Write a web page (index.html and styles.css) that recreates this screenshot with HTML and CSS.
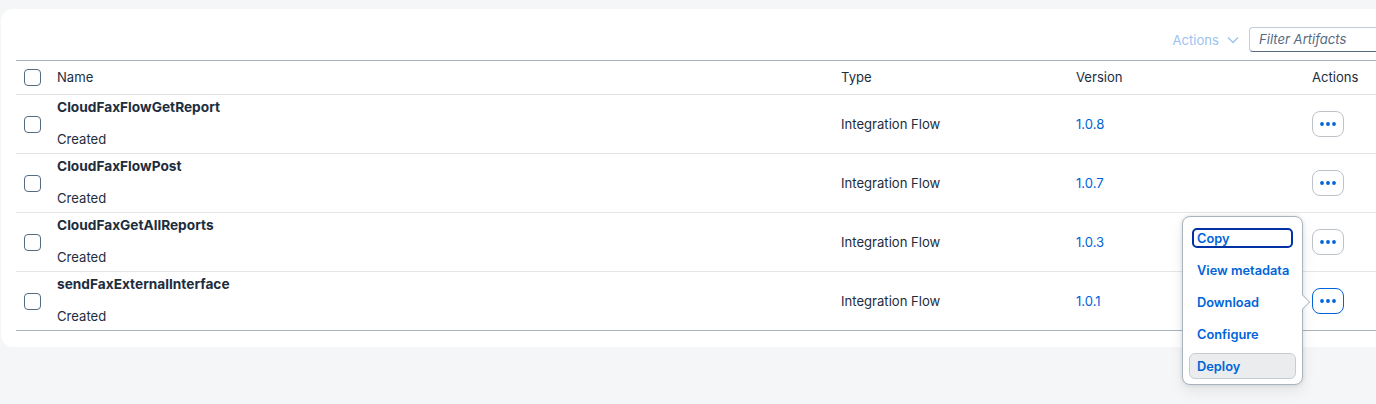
FILE: index.html
```html
<!DOCTYPE html>
<html>
<head>
<meta charset="utf-8">
<link rel="stylesheet" href="styles.css">
</head>
<body>
<div class="page">
  <div class="card">
    <div class="toolbar">
      <button class="menu-btn" disabled>Actions
        <svg width="12" height="8" viewBox="0 0 12 8"><path d="M1 1.5 6 6.5 11 1.5" fill="none" stroke="currentColor" stroke-width="1.3"/></svg>
      </button>
      <div class="filter">Filter Artifacts</div>
    </div>
    <div class="table">
      <div class="row head">
        <div class="cell cb"><span class="box"></span></div>
        <div class="cell">Name</div>
        <div class="cell">Type</div>
        <div class="cell">Version</div>
        <div class="cell">Actions</div>
      </div>
      <div class="row">
        <div class="cell cb"><span class="box"></span></div>
        <div class="cell name"><b>CloudFaxFlowGetReport</b><span>Created</span></div>
        <div class="cell">Integration Flow</div>
        <div class="cell link">1.0.8</div>
        <div class="cell"><button class="more"><svg width="16" height="4" viewBox="0 0 16 4"><circle cx="2" cy="2" r="1.9"/><circle cx="8" cy="2" r="1.9"/><circle cx="14" cy="2" r="1.9"/></svg></button></div>
      </div>
      <div class="row">
        <div class="cell cb"><span class="box"></span></div>
        <div class="cell name"><b>CloudFaxFlowPost</b><span>Created</span></div>
        <div class="cell">Integration Flow</div>
        <div class="cell link">1.0.7</div>
        <div class="cell"><button class="more"><svg width="16" height="4" viewBox="0 0 16 4"><circle cx="2" cy="2" r="1.9"/><circle cx="8" cy="2" r="1.9"/><circle cx="14" cy="2" r="1.9"/></svg></button></div>
      </div>
      <div class="row">
        <div class="cell cb"><span class="box"></span></div>
        <div class="cell name"><b>CloudFaxGetAllReports</b><span>Created</span></div>
        <div class="cell">Integration Flow</div>
        <div class="cell link">1.0.3</div>
        <div class="cell"><button class="more"><svg width="16" height="4" viewBox="0 0 16 4"><circle cx="2" cy="2" r="1.9"/><circle cx="8" cy="2" r="1.9"/><circle cx="14" cy="2" r="1.9"/></svg></button></div>
      </div>
      <div class="row last">
        <div class="cell cb"><span class="box"></span></div>
        <div class="cell name"><b>sendFaxExternalInterface</b><span>Created</span></div>
        <div class="cell">Integration Flow</div>
        <div class="cell link">1.0.1</div>
        <div class="cell"><button class="more active"><svg width="16" height="4" viewBox="0 0 16 4"><circle cx="2" cy="2" r="1.9"/><circle cx="8" cy="2" r="1.9"/><circle cx="14" cy="2" r="1.9"/></svg></button></div>
      </div>
    </div>
    <div class="popover">
      <div class="item focus">Copy</div>
      <div class="item">View metadata</div>
      <div class="item">Download</div>
      <div class="item">Configure</div>
      <div class="item hover">Deploy</div>
      <span class="arrow"></span>
    </div>
  </div>
</div>
</body>
</html>
```

FILE: styles.css
```css
* { box-sizing: border-box; }
html, body { margin: 0; padding: 0; }
body {
  background: #f5f6f7;
  font-family: "Inter", "Noto Sans", sans-serif;
  font-size: 13.1px;
  color: #1d2d3e;
  overflow: hidden;
  width: 1376px;
  height: 404px;
}
.page { padding: 9px 0 0 1px; }
.card {
  position: relative;
  width: 1392px;
  background: #fff;
  border-radius: 12px;
  padding: 18px 16px 16px 15px;
}
.toolbar {
  display: flex;
  justify-content: flex-end;
  align-items: center;
  height: 25px;
  margin-bottom: 8px;
}
.menu-btn {
  font: inherit;
  border: none;
  background: none;
  color: #9dc2f0;
  display: flex;
  align-items: center;
  gap: 8px;
  padding: 0;
  margin-right: 10px;
}
.menu-btn svg { margin-top: 1px; }
.filter {
  width: 128px;
  height: 25px;
  border: 1px solid #c4cbd2;
  border-bottom: 1px solid #556b82;
  border-radius: 4px 0 0 4px;
  padding: 3px 9px;
  font-style: italic;
  color: #556b82;
}
.table { border-top: 1px solid #a9b4be; }
.row {
  display: grid;
  grid-template-columns: 41px 784px 235px 236px 65px;
  height: 59px;
  border-bottom: 1px solid #e5e5e5;
}
.row.head { height: 34px; border-bottom-color: #e1e3e6; }
.row.head .cell { padding-bottom: 1px; }
.row.last { border-bottom-color: #a9b4be; }
.cell { display: flex; align-items: center; white-space: nowrap; }
.cb { padding-left: 8px; }
.box {
  width: 17px;
  height: 17px;
  border: 1px solid #556b82;
  border-radius: 4px;
}
.name {
  flex-direction: column;
  align-items: flex-start;
  justify-content: space-between;
  padding: 4px 0 5px;
}
.name b { font-weight: 700; font-size: 13.7px; line-height: 17px; }
.name span { line-height: 17px; }
.link { color: #0064d9; }
.more {
  width: 32px;
  height: 26px;
  border: 1px solid #bcc3ca;
  border-radius: 8px;
  background: #fff;
  display: flex;
  align-items: center;
  justify-content: center;
  padding: 0;
  fill: #0064d9;
}
.more.active { border-color: #0064d9; }
.popover {
  position: absolute;
  left: 1181px;
  top: 207px;
  width: 121px;
  height: 169px;
  background: #fff;
  border: 1px solid #a9b4be;
  border-radius: 8px;
  box-shadow: 0 0 4px rgba(0,0,0,0.12), 0 6px 14px rgba(0,0,0,0.08);
  padding: 8px 6px 5px;
  display: flex;
  flex-direction: column;
  gap: 6px;
}
.item {
  position: relative;
  height: 26px;
  flex: none;
  display: flex;
  align-items: center;
  padding-left: 7px;
  color: #0064d9;
  font-weight: 600;
  font-size: 12.8px;
  white-space: nowrap;
  border: 1px solid transparent;
  border-radius: 6px;
}
.item.focus::before {
  content: "";
  position: absolute;
  inset: 2px 2px;
  border: 2px solid #0032a5;
  border-radius: 5px;
}
.item.hover {
  background: #eaecee;
  border-color: #c7ccd1;
}
.arrow {
  position: absolute;
  right: -7px;
  top: 79px;
  width: 12px;
  height: 12px;
  background: #fff;
  border-top: 1px solid #a9b4be;
  border-right: 1px solid #a9b4be;
  transform: rotate(45deg) scale(0.85, 0.85);
}
```
